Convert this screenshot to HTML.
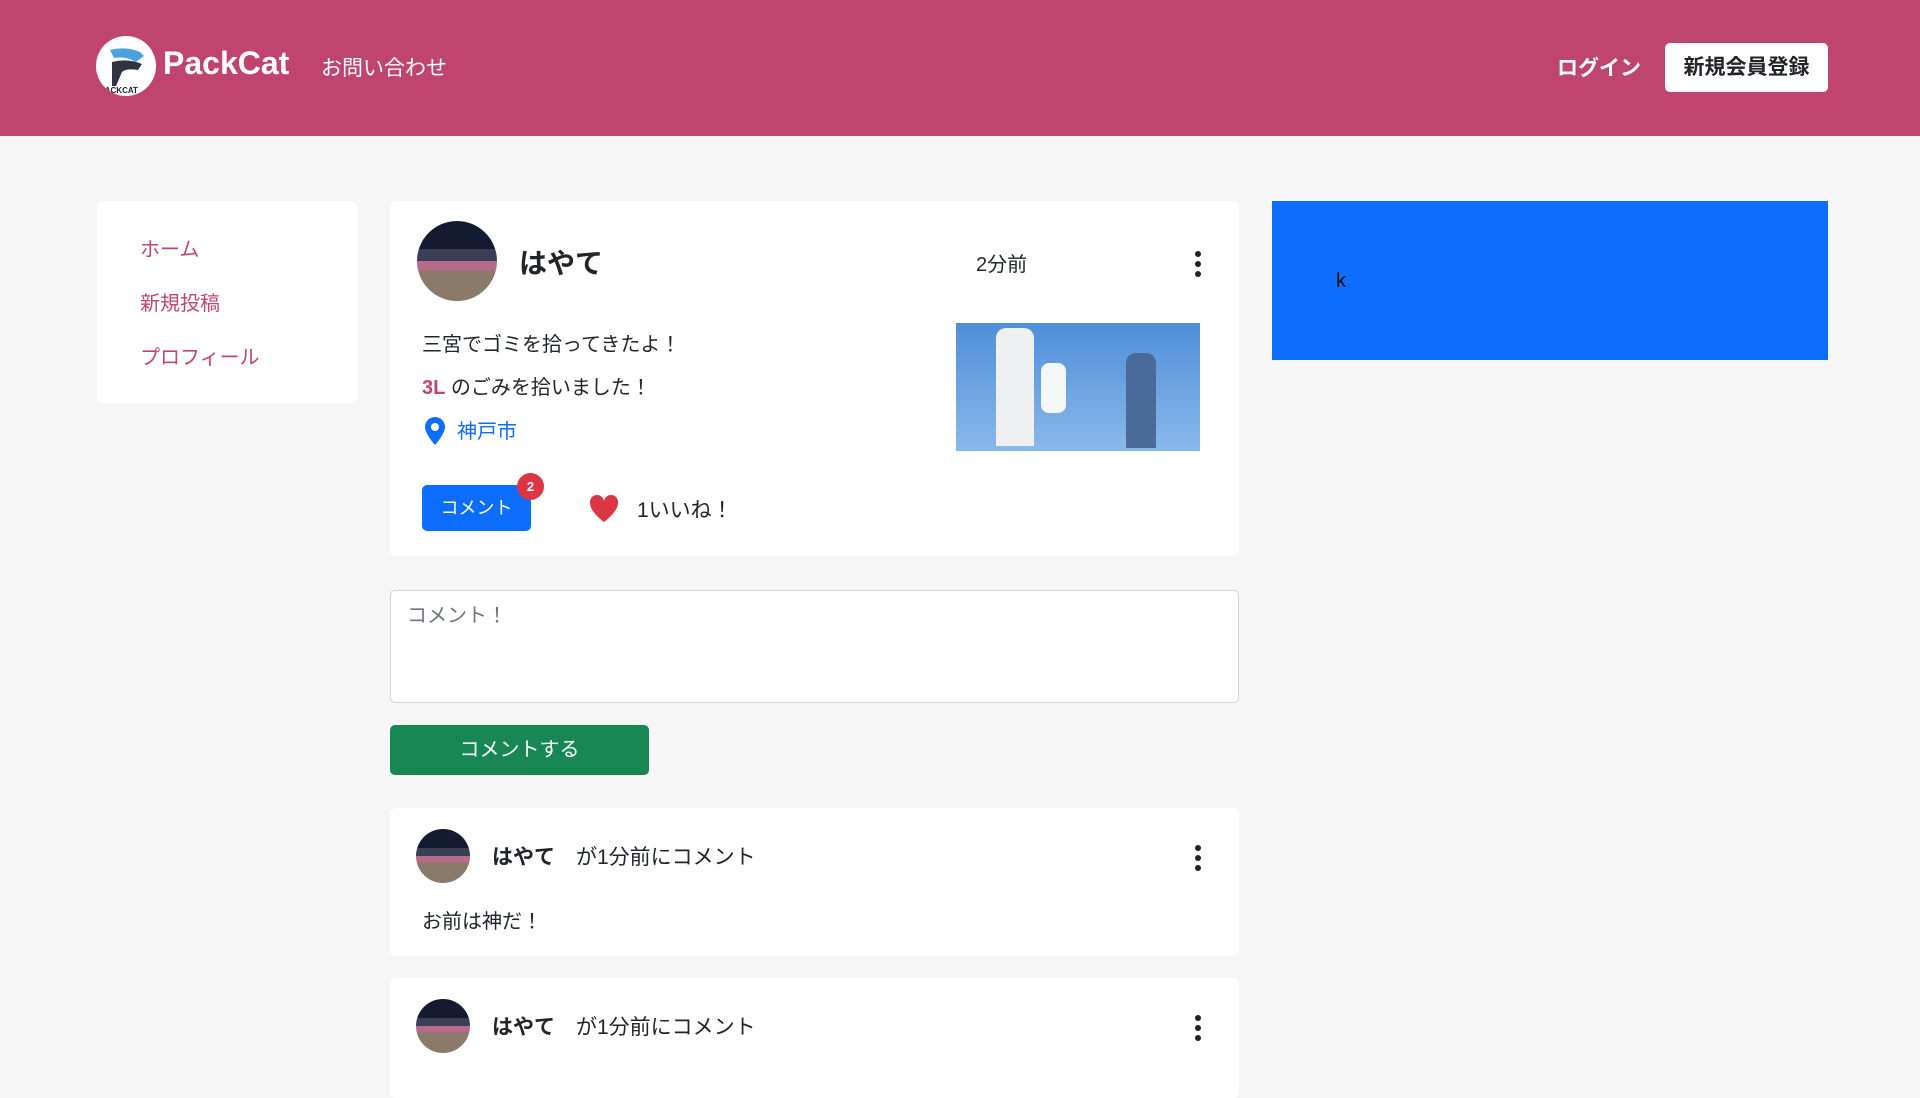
<!DOCTYPE html>
<html><head><meta charset="utf-8"><style>
*{box-sizing:border-box;margin:0;padding:0}
body{width:1920px;height:1080px;overflow:hidden;background:#f6f6f6;font-family:"Liberation Sans","Noto Sans CJK JP",sans-serif;color:#212529;position:relative}
.a{position:absolute}
.hdr{left:0;top:0;width:1920px;height:136px;background:#bf456f}
.card{background:#fff;border-radius:6px}
.av{border-radius:50%;background:linear-gradient(#141b30 0 35%,#3a3f55 35% 50%,#b86a8a 50% 62%,#8a7a6a 62%);overflow:hidden}
.dots{width:6px}
.dots i{display:block;width:6px;height:6px;border-radius:50%;background:#222;margin-bottom:4px}
</style></head><body>
<div class="a hdr"></div>
<div class="a" style="left:96px;top:36px;width:60px;height:60px;border-radius:50%;background:#fff;overflow:hidden">
<svg width="60" height="60" viewBox="0 0 60 60"><path d="M14 14 Q30 10 44 16 L48 20 L40 26 Q30 20 18 22Z" fill="#4aa3df"/><path d="M16 26 Q32 22 46 28 L42 34 Q30 32 26 36 L20 50 L16 50Z" fill="#2f3440"/><text x="4" y="57" font-size="8" font-weight="bold" fill="#222" font-family="Liberation Sans">PACKCAT</text></svg></div>
<div class="a" style="left:163px;top:45px;font-size:32px;font-weight:bold;color:#fff">PackCat</div>
<div class="a" style="left:321px;top:52px;font-size:21px;color:#fff">お問い合わせ</div>
<div class="a" style="left:1557px;top:52px;font-size:21px;font-weight:bold;color:#fff">ログイン</div>
<div class="a" style="left:1665px;top:43px;width:163px;height:49px;background:#fff;border-radius:5px;font-size:21px;font-weight:bold;text-align:center;line-height:49px">新規会員登録</div>

<div class="a card" style="left:97px;top:201px;width:260px;height:202px"></div>
<div class="a" style="left:140px;top:233px;font-size:20px;color:#c0466f">ホーム</div>
<div class="a" style="left:140px;top:287px;font-size:20px;color:#c0466f">新規投稿</div>
<div class="a" style="left:140px;top:341px;font-size:20px;color:#c0466f">プロフィール</div>

<div class="a card" style="left:390px;top:201px;width:849px;height:355px"></div>
<div class="a av" style="left:417px;top:221px;width:80px;height:80px"></div>
<div class="a" style="left:519px;top:242px;font-size:28px;font-weight:bold">はやて</div>
<div class="a" style="left:976px;top:248px;font-size:20px">2分前</div>
<div class="a dots" style="left:1195px;top:251px"><i></i><i></i><i></i></div>
<div class="a" style="left:422px;top:328px;font-size:20px">三宮でゴミを拾ってきたよ！</div>
<div class="a" style="left:422px;top:371px;font-size:20px"><b style="color:#c0466f">3L</b> のごみを拾いました！</div>
<svg class="a" style="left:424px;top:416px" width="22" height="30" viewBox="0 0 22 30"><path d="M11 1a10 10 0 0 0-10 10c0 7 10 18 10 18s10-11 10-18A10 10 0 0 0 11 1z" fill="#0d6efd"/><circle cx="11" cy="11" r="4" fill="#fff"/></svg>
<div class="a" style="left:457px;top:415px;font-size:20px;color:#0d6efd">神戸市</div>
<div class="a" style="left:956px;top:323px;width:244px;height:128px;background:linear-gradient(#4f8fd8,#8ab8ea)">
<div class="a" style="left:40px;top:5px;width:38px;height:118px;background:#eef0f2;border-radius:10px 10px 0 0"></div>
<div class="a" style="left:170px;top:30px;width:30px;height:95px;background:#4a6a9a;border-radius:10px 10px 0 0"></div>
<div class="a" style="left:85px;top:40px;width:25px;height:50px;background:#f4f6f8;border-radius:8px"></div>
</div>
<div class="a" style="left:422px;top:485px;width:109px;height:46px;background:#0d6efd;border-radius:5px;color:#fff;font-size:18px;text-align:center;line-height:46px">コメント</div>
<div class="a" style="left:517px;top:473px;width:27px;height:27px;border-radius:50%;background:#dc3545;color:#fff;font-size:13px;font-weight:bold;text-align:center;line-height:27px">2</div>
<svg class="a" style="left:588px;top:493px" width="32" height="30" viewBox="0 0 32 30"><path d="M16 29S2 19 2 10a7 7 0 0 1 14-2 7 7 0 0 1 14 2c0 9-14 19-14 19z" fill="#dc3545"/></svg>
<div class="a" style="left:637px;top:494px;font-size:21px">1いいね！</div>

<div class="a" style="left:390px;top:590px;width:849px;height:113px;background:#fff;border:1px solid #ced4da;border-radius:5px"></div>
<div class="a" style="left:407px;top:599px;font-size:20px;color:#6c757d">コメント！</div>
<div class="a" style="left:390px;top:725px;width:259px;height:50px;background:#198754;border-radius:5px;color:#fff;font-size:20px;text-align:center;line-height:50px">コメントする</div>

<div class="a card" style="left:390px;top:808px;width:849px;height:148px"></div>
<div class="a av" style="left:416px;top:829px;width:54px;height:54px"></div>
<div class="a" style="left:492px;top:841px;font-size:21px"><b>はやて</b>　が1分前にコメント</div>
<div class="a dots" style="left:1195px;top:845px"><i></i><i></i><i></i></div>
<div class="a" style="left:422px;top:905px;font-size:20px">お前は神だ！</div>

<div class="a card" style="left:390px;top:978px;width:849px;height:120px"></div>
<div class="a av" style="left:416px;top:999px;width:54px;height:54px"></div>
<div class="a" style="left:492px;top:1011px;font-size:21px"><b>はやて</b>　が1分前にコメント</div>
<div class="a dots" style="left:1195px;top:1015px"><i></i><i></i><i></i></div>

<div class="a" style="left:1272px;top:201px;width:556px;height:159px;background:#0d6efd"></div>
<div class="a" style="left:1336px;top:270px;font-size:20px;color:#111">k</div>
</body></html>
